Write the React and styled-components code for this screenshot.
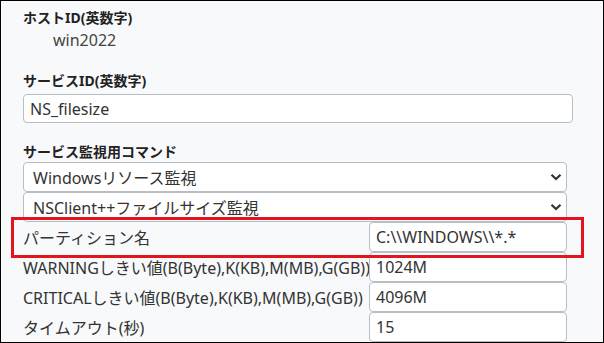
import React from 'react';
import styled, { createGlobalStyle } from 'styled-components';

const GlobalStyle = createGlobalStyle`
  html, body {
    margin: 0;
    padding: 0;
    background: #fff;
  }
`;

const Frame = styled.div`
  position: relative;
  width: 604px;
  height: 343px;
  box-sizing: border-box;
  border: 1px solid #000;
  background: #f8f9fa;
  overflow: hidden;
  font-family: "Noto Sans", "Noto Sans CJK JP", sans-serif;
  color: #333;
`;

const Form = styled.div`
  padding: 6px 0 0 22px;
`;

const Group = styled.div`
  margin-top: ${props => props.gap || 0}px;
`;

const Label = styled.div`
  font-size: 14px;
  font-weight: 700;
  line-height: 21px;
  color: #222;
`;

const Value = styled.div`
  font-size: 16px;
  line-height: 24px;
  padding-left: 30px;
  color: #444;
`;

const TextBox = styled.div`
  box-sizing: border-box;
  width: ${props => props.width}px;
  height: ${props => props.height || 29}px;
  margin-top: ${props => props.top || 0}px;
  border: 1px solid #b9bec4;
  border-radius: 4px;
  background: #fff;
  padding: 0 6px;
  display: flex;
  align-items: center;
  font-size: 16px;
  color: #333;
  white-space: nowrap;
`;

const SelectBox = styled(TextBox)`
  justify-content: space-between;
  padding: 0 4px 0 9px;
`;

const Grid = styled.div`
  display: grid;
  grid-template-columns: 346px 198px;
  grid-auto-rows: 30px;
`;

const RowLabel = styled.div`
  display: flex;
  align-items: center;
  font-size: 16px;
  color: #333;
  white-space: nowrap;
`;

const Cell = styled.div`
  display: flex;
  align-items: center;
`;

const Highlight = styled.div`
  position: absolute;
  left: 10px;
  top: 216px;
  width: 573px;
  height: 41px;
  box-sizing: border-box;
  border: 3px solid #e3141d;
  pointer-events: none;
`;

const Chevron = () => (
  <svg width="12" height="8" viewBox="0 0 12 8">
    <path d="M1.5 1.8 L6 6 L10.5 1.8" fill="none" stroke="#333" strokeWidth="2.2" />
  </svg>
);

const Select = ({ children }) => (
  <SelectBox width={544} height={30}>
    <span>{children}</span>
    <Chevron />
  </SelectBox>
);

const rows = [
  { label: 'パーティション名', value: 'C:\\\\WINDOWS\\\\*.*' },
  { label: 'WARNINGしきい値(B(Byte),K(KB),M(MB),G(GB))', value: '1024M' },
  { label: 'CRITICALしきい値(B(Byte),K(KB),M(MB),G(GB))', value: '4096M' },
  { label: 'タイムアウト(秒)', value: '15' }
];

const App = () => (
  <Frame>
    <GlobalStyle />
    <Form>
      <Group>
        <Label>ホストID(英数字)</Label>
        <Value>win2022</Value>
      </Group>
      <Group gap={18}>
        <Label>サービスID(英数字)</Label>
        <TextBox width={550} top={3}>NS_filesize</TextBox>
      </Group>
      <Group gap={18}>
        <Label>サービス監視用コマンド</Label>
        <Select>Windowsリソース監視</Select>
        <Select>NSClient++ファイルサイズ監視</Select>
        <Grid>
          {rows.map(row => (
            <React.Fragment key={row.label}>
              <RowLabel>{row.label}</RowLabel>
              <Cell>
                <TextBox width={198} height={30}>{row.value}</TextBox>
              </Cell>
            </React.Fragment>
          ))}
        </Grid>
      </Group>
    </Form>
    <Highlight />
  </Frame>
);

export default App;
